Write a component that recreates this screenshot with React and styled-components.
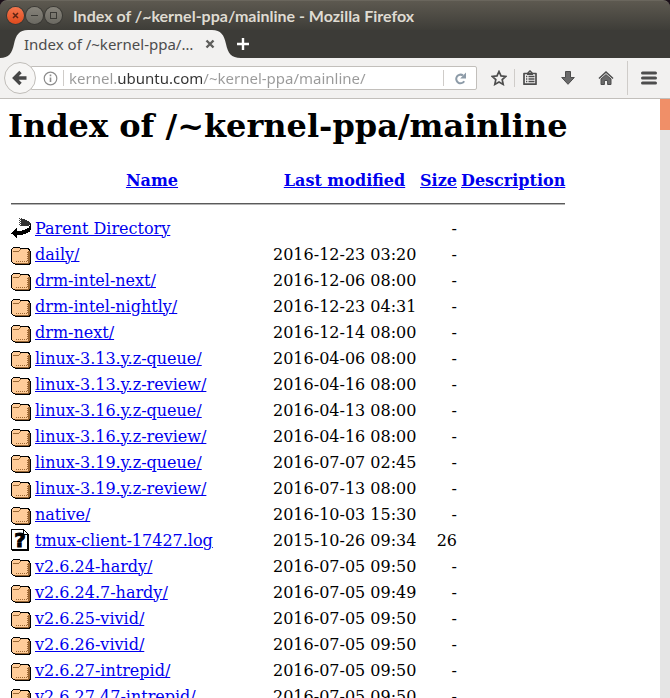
import React from 'react';
import styled, { createGlobalStyle } from 'styled-components';

const uiFont = '"Noto Sans", "Open Sans", sans-serif';

const entries = [
  { kind: 'back', name: 'Parent Directory', date: '', size: '-' },
  { kind: 'folder', name: 'daily/', date: '2016-12-23 03:20', size: '-' },
  { kind: 'folder', name: 'drm-intel-next/', date: '2016-12-06 08:00', size: '-' },
  { kind: 'folder', name: 'drm-intel-nightly/', date: '2016-12-23 04:31', size: '-' },
  { kind: 'folder', name: 'drm-next/', date: '2016-12-14 08:00', size: '-' },
  { kind: 'folder', name: 'linux-3.13.y.z-queue/', date: '2016-04-06 08:00', size: '-' },
  { kind: 'folder', name: 'linux-3.13.y.z-review/', date: '2016-04-16 08:00', size: '-' },
  { kind: 'folder', name: 'linux-3.16.y.z-queue/', date: '2016-04-13 08:00', size: '-' },
  { kind: 'folder', name: 'linux-3.16.y.z-review/', date: '2016-04-16 08:00', size: '-' },
  { kind: 'folder', name: 'linux-3.19.y.z-queue/', date: '2016-07-07 02:45', size: '-' },
  { kind: 'folder', name: 'linux-3.19.y.z-review/', date: '2016-07-13 08:00', size: '-' },
  { kind: 'folder', name: 'native/', date: '2016-10-03 15:30', size: '-' },
  { kind: 'unknown', name: 'tmux-client-17427.log', date: '2015-10-26 09:34', size: '26' },
  { kind: 'folder', name: 'v2.6.24-hardy/', date: '2016-07-05 09:50', size: '-' },
  { kind: 'folder', name: 'v2.6.24.7-hardy/', date: '2016-07-05 09:49', size: '-' },
  { kind: 'folder', name: 'v2.6.25-vivid/', date: '2016-07-05 09:50', size: '-' },
  { kind: 'folder', name: 'v2.6.26-vivid/', date: '2016-07-05 09:50', size: '-' },
  { kind: 'folder', name: 'v2.6.27-intrepid/', date: '2016-07-05 09:50', size: '-' },
  { kind: 'folder', name: 'v2.6.27.47-intrepid/', date: '2016-07-05 09:50', size: '-' },
];

//The small icons Apache puts in front of every entry
const FolderIcon = () => (
  <EntrySvg viewBox="0 0 20 22" shapeRendering="crispEdges" role="img" aria-label="[DIR]">
    <path d="M2 4H9V5H18V6H19V8H20V21H19V22H4V21H2V20H1V19H0V6H1V5H2Z" fill="#000" />
    <path d="M2 5H9V6H17V7H18V19H17V20H2V19H1V6H2Z" fill="#ffcc99" />
    <path d="M2 8H8V9H2ZM8 7H9V8H8ZM9 6H10V7H9Z" fill="#996633" />
    <path d="M17 8H19V20H18V21H4V20H17Z" fill="#996633" />
    <path d="M16 9h1v1h-1zM16 11h1v1h-1zM16 13h1v1h-1zM16 15h1v1h-1zM16 17h1v1h-1zM15 18h1v1h-1zM13 18h1v1h-1zM11 18h1v1h-1zM9 18h1v1h-1zM7 18h1v1h-1zM5 18h1v1h-1z" fill="#996633" />
  </EntrySvg>
);

const BackIcon = () => (
  <EntrySvg viewBox="0 0 20 22" shapeRendering="crispEdges" role="img" aria-label="[DIR]">
    <path d="M10 2h4v1h2v1h2v1h1v1h1v2h-2v1h-8z" fill="#333" />
    <path d="M8 1h1v1h-1zM9 2h1v1h-1zM8 3h1v1h-1zM9 4h1v1h-1zM8 5h1v1h-1zM9 6h1v1h-1zM8 7h1v1h-1zM9 8h1v1h-1zM10 1h1v1h-1z" fill="#444" />
    <path d="M20 7V13H19V15H17V16H15V17H12V18H6V21H5V20H4V19H3V18H2V17H0V16H1V15H2V14H3V13H4V12H5V11H6V14H11V13H14V12H16V11H18V9H19V7Z" fill="#000" />
  </EntrySvg>
);

const UnknownIcon = () => (
  <EntrySvg viewBox="0 0 20 22" role="img" aria-label="[   ]">
    <g shapeRendering="crispEdges">
      <path d="M0 0H13V1H14V2H15V3H16V4H17V5H18V22H1V21H0Z" fill="#000" />
      <path d="M1 1H12V6H16V20H1Z" fill="#fff" />
      <path d="M13 2h1v1h1v1h1v1h-3z" fill="#fff" />
    </g>
    <text x="9" y="18" textAnchor="middle" fontFamily="DejaVu Sans, sans-serif" fontWeight="bold" fontSize="20" stroke="#000">?</text>
  </EntrySvg>
);

const icons = { folder: FolderIcon, back: BackIcon, unknown: UnknownIcon };

const TitleBar = () => (
  <TitleBarWrapper>
    <WindowButton $close aria-label="Close">
      <svg width="17" height="17" viewBox="0 0 17 17"><path d="M6 6L11 11M11 6L6 11" stroke="#5c2414" strokeWidth="1.5" /></svg>
    </WindowButton>
    <WindowButton aria-label="Minimize">
      <svg width="17" height="17" viewBox="0 0 17 17"><path d="M5 8.5H12" stroke="#3a3935" /></svg>
    </WindowButton>
    <WindowButton aria-label="Maximize">
      <svg width="17" height="17" viewBox="0 0 17 17"><rect x="5.5" y="5.5" width="6" height="6" fill="none" stroke="#3a3935" /></svg>
    </WindowButton>
    <WindowTitle>Index of /~kernel-ppa/mainline - Mozilla Firefox</WindowTitle>
  </TitleBarWrapper>
);

const TabStrip = () => (
  <TabStripWrapper>
    <Tab>
      <TabShape viewBox="0 0 241 28" aria-hidden="true">
        <path d="M0 28C9 28 12 23 14 14C16 5 19 0 28 0H212C221 0 224 5 226 14C228 23 231 28 241 28Z" fill="#f2f1f0" />
      </TabShape>
      <TabTitle>Index of /~kernel-ppa/…</TabTitle>
      <TabButton aria-label="Close tab">
        <svg width="10" height="10" viewBox="0 0 10 10"><path d="M1.5 1.5L8.5 8.5M8.5 1.5L1.5 8.5" stroke="#5e5e5c" strokeWidth="2.4" /></svg>
      </TabButton>
    </Tab>
    <TabButton aria-label="New tab">
      <svg width="14" height="14" viewBox="0 0 14 14"><path d="M7 1V13M1 7H13" stroke="#fff" strokeWidth="2.4" /></svg>
    </TabButton>
  </TabStripWrapper>
);

const Toolbar = () => (
  <ToolbarWrapper>
    <BackButton aria-label="Back">
      <svg width="16" height="16" viewBox="0 0 16 16"><path d="M14.5 8H3M8.5 2L2.5 8L8.5 14" fill="none" stroke="#474747" strokeWidth="3.4" /></svg>
    </BackButton>
    <UrlBar>
      <IconButton $width={26} aria-label="Site information">
        <svg width="15" height="15" viewBox="0 0 15 15">
          <circle cx="7.5" cy="7.5" r="6.3" fill="none" stroke="#8c8c8c" strokeWidth="1.2" />
          <path d="M7.5 6.5V11M7.5 3.6V5.2" stroke="#8c8c8c" strokeWidth="1.6" />
        </svg>
      </IconButton>
      <Divider $height={16} />
      <UrlInput aria-label="Address" defaultValue="kernel.ubuntu.com/~kernel-ppa/mainline/" />
      <Divider $height={16} />
      <IconButton $width={32} aria-label="Reload">
        <svg width="13" height="13" viewBox="0 0 13 13">
          <path d="M9 3.4A4.3 4.3 0 1 0 10.2 9.2" fill="none" stroke="#8d9ba8" strokeWidth="2" />
          <path d="M12 0.5V6.5H6.2Z" fill="#8d9ba8" />
        </svg>
      </IconButton>
    </UrlBar>
    <IconButton $width={30} aria-label="Bookmark this page">
      <svg width="16" height="16" viewBox="0 0 16 16"><path d="M8 1.5L10 5.9L14.8 6.4L11.2 9.6L12.2 14.4L8 12L3.8 14.4L4.8 9.6L1.2 6.4L6 5.9Z" fill="none" stroke="#4d4d4d" strokeWidth="1.7" /></svg>
    </IconButton>
    <Divider $height={18} />
    <IconButton $width={30} aria-label="Bookmarks">
      <svg width="14" height="16" viewBox="0 0 14 16">
        <path d="M1 3.5H4.5L7 1L9.5 3.5H13V14.2H1Z" fill="none" stroke="#4d4d4d" strokeWidth="1.7" strokeLinejoin="round" />
        <path d="M4 3H10V5H4Z" fill="#4d4d4d" />
        <path d="M3 6.5H4.3M5.5 6.5H11.5M3 9H4.3M5.5 9H11.5M3 11.5H4.3M5.5 11.5H11.5" stroke="#4d4d4d" strokeWidth="1.3" />
      </svg>
    </IconButton>
    <IconButton $width={46} aria-label="Downloads">
      <svg width="16" height="16" viewBox="0 0 16 16"><path d="M5.5 1.5H10.5V7.5H14.3L8 14.3L1.7 7.5H5.5Z" fill="#6a6a6a" stroke="#4d4d4d" /></svg>
    </IconButton>
    <IconButton $width={30} aria-label="Home">
      <svg width="16" height="16" viewBox="0 0 16 16">
        <path d="M3 9L8 4.6L13 9V14.5H9.6V10.5H6.4V14.5H3Z" fill="#6a6a6a" stroke="#4d4d4d" />
        <path d="M1 8.5L8 2L15 8.5" fill="none" stroke="#4d4d4d" strokeWidth="1.6" />
      </svg>
    </IconButton>
    <Divider $height={34} $spaced />
    <IconButton $width={42} aria-label="Open menu">
      <svg width="16" height="14" viewBox="0 0 16 14"><path d="M1.5 2H14.5M1.5 7H14.5M1.5 12H14.5" stroke="#4d4d4d" strokeWidth="3" strokeLinecap="round" /></svg>
    </IconButton>
  </ToolbarWrapper>
);

//One line of the directory listing
const Entry = ({ entry }) => {
  const Icon = icons[entry.kind];
  return (
    <tr>
      <Cell><Icon /></Cell>
      <Cell><a href="#">{entry.name}</a></Cell>
      <Cell $right>{entry.date}</Cell>
      <Cell $right>{entry.size}</Cell>
      <Cell />
    </tr>
  );
};

const App = () => (
  <Browser>
    <GlobalStyle />
    <TitleBar />
    <TabStrip />
    <Toolbar />
    <Viewport>
      <Page>
        <Heading>Index of /~kernel-ppa/mainline</Heading>
        <Listing>
          <colgroup>
            <Col $width={22} />
            <Col $width={236} />
            <Col $width={145} />
            <Col $width={39} />
            <Col $width={106} />
          </colgroup>
          <thead>
            <tr>
              <HeadCell />
              <HeadCell><a href="#">Name</a></HeadCell>
              <HeadCell><a href="#">Last modified</a></HeadCell>
              <HeadCell><a href="#">Size</a></HeadCell>
              <HeadCell><a href="#">Description</a></HeadCell>
            </tr>
            <tr>
              <HeadCell colSpan="5"><Rule /></HeadCell>
            </tr>
          </thead>
          <tbody>
            {entries.map((entry) => <Entry key={entry.name} entry={entry} />)}
          </tbody>
        </Listing>
      </Page>
      <ScrollTrack><ScrollThumb /></ScrollTrack>
    </Viewport>
  </Browser>
);

const GlobalStyle = createGlobalStyle`
*{
  box-sizing:border-box;
}
body{
  margin:0;
  background:#1a0f18;
}
button{
  display:flex;
  align-items:center;
  justify-content:center;
  padding:0;
  border:0;
  background:none;
}
`;

const Browser = styled.div`
display:flex;
flex-direction:column;
height:100vh;
overflow:hidden;
`;

const TitleBarWrapper = styled.header`
display:flex;
align-items:center;
gap:2px;
height:30px;
padding:0 7px;
flex-shrink:0;
background:linear-gradient(#5d5950, #3e3d38);
border-top:1px solid #6a665d;
border-radius:7px 7px 0 0;
`;

const WindowButton = styled.button`
width:17px;
height:17px;
border-radius:50%;
background:${(props) => (props.$close ? 'linear-gradient(#f4764d, #df4a1d)' : 'linear-gradient(#86837a, #6b6962)')};
box-shadow:0 0 0 1px #3a3935;
`;

const WindowTitle = styled.div`
margin-left:9px;
font:bold 16px/20px Lato, ${uiFont};
color:#dfdbd2;
white-space:nowrap;
`;

const TabStripWrapper = styled.nav`
display:flex;
height:28px;
flex-shrink:0;
background:#3c3b37;
`;

const Tab = styled.div`
position:relative;
display:flex;
align-items:center;
width:232px;
padding:0 11px 0 24px;
`;

/*The curved tab outline lies behind the title and reaches a bit past the tab*/
const TabShape = styled.svg`
position:absolute;
left:0;
top:0;
width:241px;
height:28px;
`;

const TabTitle = styled.span`
position:relative;
flex:1;
font:15px/20px ${uiFont};
color:#4c4c4c;
white-space:nowrap;
`;

const TabButton = styled.button`
position:relative;
width:22px;
`;

const ToolbarWrapper = styled.div`
display:flex;
align-items:center;
height:41px;
flex-shrink:0;
padding-left:4px;
background:#f2f1f0;
border-bottom:1px solid #c2bfbb;
`;

const BackButton = styled.button`
position:relative;
z-index:1;
width:32px;
height:32px;
margin-right:-5px;
flex-shrink:0;
border:1px solid #c0bdb9;
border-radius:50%;
background:#f7f6f5;
`;

const UrlBar = styled.div`
display:flex;
align-items:center;
flex:1;
height:24px;
margin-right:7px;
padding-left:5px;
background:#fff;
border:1px solid #c2bfbb;
border-radius:0 2px 2px 0;
`;

/*The domain is darker than the rest of the address*/
const UrlInput = styled.input`
flex:1;
min-width:0;
height:20px;
margin:0 5px;
padding:0;
border:0;
outline:0;
font:15px/20px ${uiFont};
color:transparent;
background:linear-gradient(to right, #999 48px, #333 48px, #333 133px, #999 133px);
-webkit-background-clip:text;
background-clip:text;
`;

const IconButton = styled.button`
width:${(props) => props.$width}px;
height:22px;
flex-shrink:0;
`;

const Divider = styled.span`
width:1px;
height:${(props) => props.$height}px;
flex-shrink:0;
margin-left:${(props) => (props.$spaced ? 6 : 0)}px;
background:#cfccc9;
`;

const Viewport = styled.main`
display:flex;
flex:1;
min-height:0;
background:#fff;
`;

const Page = styled.div`
flex:1;
padding:8px;
overflow:hidden;
font:16px/19px "DejaVu Serif", serif;
color:#000;

a{
  color:#0000ee;
}
`;

const Heading = styled.h1`
margin:0 0 23px;
font-size:32px;
line-height:38px;
white-space:nowrap;
`;

const Listing = styled.table`
table-layout:fixed;
width:560px;
border-spacing:2px;
white-space:nowrap;
`;

const Col = styled.col`
width:${(props) => props.$width}px;
`;

const HeadCell = styled.th`
padding:1px;
`;

const Cell = styled.td`
height:24px;
padding:1px;
text-align:${(props) => (props.$right ? 'right' : 'left')};
`;

const Rule = styled.hr`
margin:9px 0 8px;
border:0;
border-top:1px solid #5a5a5a;
border-bottom:1px solid #b4b4b4;
`;

const EntrySvg = styled.svg`
display:block;
width:20px;
height:22px;
`;

const ScrollTrack = styled.div`
width:10px;
flex-shrink:0;
background:#e5e5e5;
`;

const ScrollThumb = styled.div`
height:31px;
background:#f08f68;
`;

export default App;
